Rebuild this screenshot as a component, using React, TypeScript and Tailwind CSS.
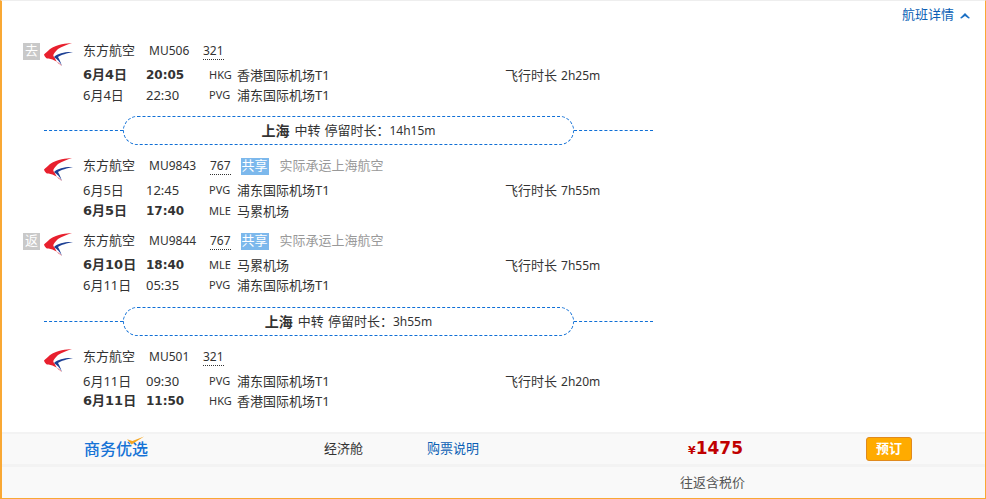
import type { ReactNode } from "react";

const font = "font-['Noto_Sans','Noto_Sans_CJK_SC',sans-serif]";
const boldFont = "font-['DejaVu_Sans','Noto_Sans_CJK_SC',sans-serif] font-bold";

function AirlineLogo() {
  return (
    <svg viewBox="0 0 30 24" className="h-[24px] w-[30px] shrink-0">
      <path d="M28 0C22 0.5 14 1 6 6C4 8 1.5 10 0 11.5C0.5 13.5 2 15 3 15.5C7 15.5 14 18 18 23C15 21 11.5 18 11 15C8 12.5 9 11 14 6C18 3.5 23 1.5 28 0Z" fill="#e8202e" />
      <path d="M29 9C22 8.5 14 10 10 14C13 16 16 19 18 23C16.5 18.5 15 16 14 14C17 12 23 10 29 9Z" fill="#1c3f94" />
    </svg>
  );
}

type Leg = {
  date: string;
  time: string;
  code: string;
  airport: string;
  bold?: boolean;
  duration?: string;
};

type Segment = {
  tag?: string;
  flightNo: string;
  plane: string;
  shared?: boolean;
  legs: Leg[];
};

function LegRow({ leg }: { leg: Leg }) {
  return (
    <div className="flex h-[20px] items-center pl-[81px] leading-[16px]">
      <span className={`w-[63px] ${leg.bold ? boldFont : ""}`}>{leg.date}</span>
      <span className={`w-[63px] ${leg.bold ? `${boldFont} text-[12px]` : ""}`}>{leg.time}</span>
      <span className="w-[28px] text-[11px]">{leg.code}</span>
      <span className="w-[268px]">{leg.airport}</span>
      {leg.duration && (
        <span>
          飞行时长<span className="ml-[4px] text-[12px]">{leg.duration}</span>
        </span>
      )}
    </div>
  );
}

function SegmentBlock({ seg, className, legsClass = "" }: { seg: Segment; className: string; legsClass?: string }) {
  return (
    <div className={className}>
      <div className="flex h-[20px] items-center pl-[21px]">
        <div className="mr-[4px] flex h-[17px] w-[17px] items-center justify-center">
          {seg.tag && (
            <span className="flex h-[17px] w-[17px] items-center justify-center bg-[#c9c9c9] text-white">
              {seg.tag}
            </span>
          )}
        </div>
        <div className="mt-[8px] mr-[9px]">
          <AirlineLogo />
        </div>
        <span className="w-[66px]">东方航空</span>
        <span className={`text-[12px] ${seg.shared ? "w-[61px]" : "w-[54px]"}`}>{seg.flightNo}</span>
        <span className="border-b border-dotted border-[#333] pb-[1px] text-[12px] leading-[15px]">{seg.plane}</span>
        {seg.shared && (
          <>
            <span className="ml-[10px] flex h-[17px] w-[28px] items-center justify-center bg-[#7cb8ec] text-white">
              共享
            </span>
            <span className="ml-[11px] text-[#999]">实际承运上海航空</span>
          </>
        )}
      </div>
      <div className={`mt-[4px] pb-[1px] ${legsClass}`}>
        {seg.legs.map((leg) => (
          <LegRow key={leg.code + leg.date} leg={leg} />
        ))}
      </div>
    </div>
  );
}

function Transfer({ children, className }: { children: ReactNode; className: string }) {
  return (
    <div className={`ml-[42px] flex h-[29px] w-[609px] items-center ${className}`}>
      <div className="h-0 w-[79px] border-t border-dashed border-[#0f6fd6]" />
      <div className="flex h-[29px] w-[451px] items-center justify-center rounded-[15px] border border-dashed border-[#0f6fd6]">
        {children}
      </div>
      <div className="h-0 flex-1 border-t border-dashed border-[#0f6fd6]" />
    </div>
  );
}

export default function App() {
  return (
    <div className={`h-[499px] w-[986px] overflow-hidden border-t border-r border-b border-l-2 border-t-[#eeeeee] border-r-[#f9a834] border-b-[#f9a834] border-l-[#f9a834] bg-white text-[13px] text-[#333] ${font}`}>
      {/* Top link */}
      <div className="flex h-[40px] justify-end pt-[4px] pr-[15px] text-[#0b5fb5]">
        <span className="flex h-[20px] items-center">航班详情</span>
        <svg viewBox="0 0 10 6" className="mt-[8px] ml-[6px] h-[6px] w-[10px]">
          <path d="M5 0L10 5L8.5 5.5L5 3L1.5 5.5L0 5Z" fill="#1a6fc4" />
        </svg>
      </div>

      <SegmentBlock
        className=""
        seg={{
          tag: "去",
          flightNo: "MU506",
          plane: "321",
          legs: [
            { date: "6月4日", time: "20:05", code: "HKG", airport: "香港国际机场T1", bold: true, duration: "2h25m" },
            { date: "6月4日", time: "22:30", code: "PVG", airport: "浦东国际机场T1" },
          ],
        }}
      />
      <Transfer className="mt-[10px]">
        <span className="text-[14px] font-bold">上海</span>
        <span className="ml-[5px]">中转</span>
        <span className="ml-[4px]">停留时长：<span className="text-[12px]">14h15m</span></span>
      </Transfer>
      <SegmentBlock
        className="mt-[11px]"
        legsClass="flex flex-col gap-[1px]"
        seg={{
          flightNo: "MU9843",
          plane: "767",
          shared: true,
          legs: [
            { date: "6月5日", time: "12:45", code: "PVG", airport: "浦东国际机场T1", duration: "7h55m" },
            { date: "6月5日", time: "17:40", code: "MLE", airport: "马累机场", bold: true },
          ],
        }}
      />
      <SegmentBlock
        className="mt-[9px]"
        seg={{
          tag: "返",
          flightNo: "MU9844",
          plane: "767",
          shared: true,
          legs: [
            { date: "6月10日", time: "18:40", code: "MLE", airport: "马累机场", bold: true, duration: "7h55m" },
            { date: "6月11日", time: "05:35", code: "PVG", airport: "浦东国际机场T1" },
          ],
        }}
      />
      <Transfer className="mt-[11px]">
        <span className="text-[14px] font-bold">上海</span>
        <span className="ml-[5px]">中转</span>
        <span className="ml-[4px]">停留时长：<span className="text-[12px]">3h55m</span></span>
      </Transfer>
      <SegmentBlock
        className="mt-[11px]"
        seg={{
          flightNo: "MU501",
          plane: "321",
          legs: [
            { date: "6月11日", time: "09:30", code: "PVG", airport: "浦东国际机场T1", duration: "2h20m" },
            { date: "6月11日", time: "11:50", code: "HKG", airport: "香港国际机场T1", bold: true },
          ],
        }}
      />

      {/* Footer */}
      <div className="mt-[20px] bg-[#f9f9f9]">
        <div className="box-content flex h-[30px] items-center border-t-2 border-b-[3px] border-[#f3f3f3]">
          <div className="relative ml-[82px] w-[240px]">
            <span className="text-[16px] font-medium text-[#1673d6]">商务优选</span>
            <svg viewBox="0 0 20 10" className="absolute top-[-1px] left-[43px] h-[10px] w-[18px]">
              <path d="M0 3L5 9L19 0L6 5Z" fill="#f5a623" />
            </svg>
          </div>
          <span className="w-[103px]">经济舱</span>
          <span className="w-[261px] text-[#0b5fb5]">购票说明</span>
          <span className={`flex w-[178px] items-baseline text-[#c00000] ${boldFont}`}>
            <span className="text-[11px]">¥</span>
            <span className="text-[17px]">1475</span>
          </span>
          <button className="flex h-[24px] w-[46px] items-center justify-center rounded-[3px] border border-[#e08a1e] bg-[#ffab00] font-bold text-white">
            预订
          </button>
        </div>
        <div className="flex h-[31px] items-center pl-[678px] text-[#555]">往返含税价</div>
      </div>
    </div>
  );
}
